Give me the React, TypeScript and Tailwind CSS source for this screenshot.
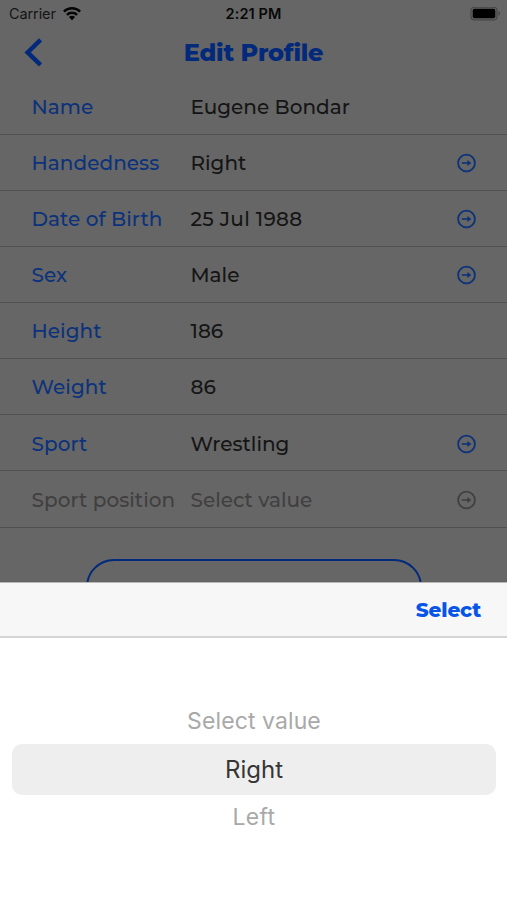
const rows = [
  { label: 'Name', value: 'Eugene Bondar' },
  { label: 'Handedness', value: 'Right', arrow: true },
  { label: 'Date of Birth', value: '25 Jul 1988', arrow: true, spaced: true },
  { label: 'Sex', value: 'Male', arrow: true },
  { label: 'Height', value: '186' },
  { label: 'Weight', value: '86' },
  { label: 'Sport', value: 'Wrestling', arrow: true },
  { label: 'Sport position', value: 'Select value', arrow: true, disabled: true },
];

function ArrowCircle() {
  return (
    <svg className="mr-[31px] ml-auto size-5" viewBox="0 0 20 20" fill="none" stroke="currentColor">
      <circle cx="10.5" cy="10" r="8.4" strokeWidth="1.8" />
      <path d="M5.8 10h7" strokeWidth="1.6" />
      <path d="M11.4 6.9 15.4 10l-4 3.1z" fill="currentColor" stroke="none" />
    </svg>
  );
}

function StatusBar() {
  return (
    <div className="grid h-[27px] grid-cols-3 items-center pt-px font-['Inter','Liberation_Sans',sans-serif] text-[14.5px] text-[#151515]">
      <div className="flex items-center pl-[9px]">
        <span className="tracking-[-0.1px]">Carrier</span>
        <svg className="ml-[7px] h-[14px] w-[18px]" viewBox="0 0 18 14" fill="none" stroke="#050505" strokeWidth="2.4">
          <path d="M.9 4.6a11.5 11.5 0 0 1 16.2 0" />
          <path d="M3.9 7.8a7.2 7.2 0 0 1 10.2 0" />
          <path d="M9 13.2 5.9 10a4.4 4.4 0 0 1 6.2 0z" fill="#050505" stroke="none" />
        </svg>
      </div>
      <span className="text-center font-semibold tracking-[0.1px] text-[#080808]">2:21 PM</span>
      <svg className="mr-[6px] ml-auto h-[14px] w-[31px]" viewBox="0 0 31 14">
        <rect x="1" y=".2" width="26" height="12.6" rx="3.4" fill="none" stroke="#464646" strokeWidth="1.2" />
        <rect x="2.7" y="1.8" width="22.6" height="9.4" rx="1.8" fill="#000" />
        <path d="M28.5 4.3c2 .6 2 3.8 0 4.4z" fill="#464646" />
      </svg>
    </div>
  );
}

export default function App() {
  return (
    <div className="flex h-[900px] w-[507px] flex-col overflow-hidden bg-[#666666] font-['Montserrat','Inter','Liberation_Sans',sans-serif]">
      <StatusBar />
      <header className="grid h-[51.6px] shrink-0 grid-cols-[80px_1fr_80px] items-center">
        <svg className="ml-6 h-[30px] w-[20px]" viewBox="0 0 20 30" fill="none" stroke="#03297a" strokeWidth="4.4">
          <path d="M16.5 1.9 3.6 14.4l12.9 12.5" />
        </svg>
        <h1 className="text-center text-[24px] font-extrabold tracking-[-0.25px] whitespace-nowrap text-[#03297a]">Edit Profile</h1>
      </header>
      <main className="h-[503.7px] shrink-0 overflow-hidden">
        {rows.map((r) => (
          <div
            key={r.label}
            className={`flex h-[56.14px] items-center border-b-[1.5px] border-[#505050] pt-[1.2px] text-[20px] font-medium whitespace-nowrap ${r.disabled ? 'text-[#404040]' : 'text-[#0c327b]'}`}
          >
            <span className="w-[190.5px] shrink-0 pl-[31.5px] tracking-[0.05px]">{r.label}</span>
            <span className={`${r.disabled ? 'text-[#404040]' : 'text-[#151515]'} ${r.spaced ? 'tracking-[0.3px]' : ''}`}>{r.value}</span>
            {r.arrow && <ArrowCircle />}
          </div>
        ))}
        <div className="mx-auto mt-[31px] h-[56px] w-[336px] rounded-full border-[2.5px] border-[#03297a]" />
      </main>
      <section className="flex-1 bg-white">
        <div className="flex h-[55.3px] items-center justify-end border-t border-b-2 border-t-[#b8b8b8] border-b-[#d5d5d5] bg-[#f7f7f7] pt-[2px] pr-[26px]">
          <button className="text-[20px] font-extrabold tracking-[-0.15px] text-[#0755e8]">Select</button>
        </div>
        <div className="flex flex-col items-center pt-[62px] pr-[11px] pl-3 font-['Inter','Liberation_Sans',sans-serif]">
          <div className="flex h-[44px] items-center text-[23px] tracking-[0.1px] text-[#a9a9a9]">Select value</div>
          <div className="flex h-[51px] w-full items-center justify-center rounded-[10px] bg-[#eeeeee] pt-px text-[24px] text-[#363636]">Right</div>
          <div className="flex h-[45px] items-center text-[23px] tracking-[0.3px] text-[#a9a9a9]">Left</div>
        </div>
      </section>
    </div>
  );
}
